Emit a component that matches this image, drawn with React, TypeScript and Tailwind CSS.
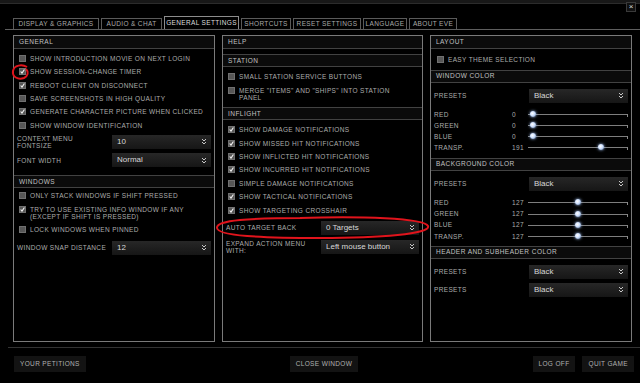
import clsx from "clsx";

const label = "text-[6.5px] uppercase tracking-[0.35px] leading-[7px] text-[#acacac] whitespace-nowrap";

function Box({ checked }: { checked?: boolean }) {
  return (
    <span className="flex h-[7px] w-[7px] shrink-0 items-center justify-center border border-[#707070] bg-[#575757]">
      {checked ? (
        <svg width="5" height="5" viewBox="0 0 6 6">
          <path d="M0.8 3 L2.4 5 L5.3 0.6" stroke="#f4f4f4" strokeWidth="1.3" fill="none" />
        </svg>
      ) : null}
    </span>
  );
}

function CheckRow({
  text,
  checked,
  className = "h-[13.3px]",
}: {
  text: string | string[];
  checked?: boolean;
  className?: string;
}) {
  const lines = Array.isArray(text) ? text : [text];
  return (
    <div className={clsx("flex items-center px-[5px]", className)}>
      <div className={clsx("flex gap-[4px]", lines.length > 1 ? "items-start" : "items-center")}>
        <Box checked={checked} />
        <div className="flex flex-col">
          {lines.map((l) => (
            <span key={l} className={label}>
              {l}
            </span>
          ))}
        </div>
      </div>
    </div>
  );
}

function Header({ title, top }: { title: string; top?: boolean }) {
  return (
    <div
      className={clsx(
        "flex h-[13px] shrink-0 items-center border-b border-[#424242] bg-[#0b0b0b] px-[5px]",
        top && "border-t",
      )}
    >
      <span className="text-[6.5px] uppercase tracking-[0.45px] text-[#c2c2c2]">{title}</span>
    </div>
  );
}

function Chevrons() {
  return (
    <svg width="6" height="7" viewBox="0 0 6 7">
      <path d="M1 1 L3 3 L5 1 M1 4 L3 6 L5 4" stroke="#c8c8c8" strokeWidth="1" fill="none" />
    </svg>
  );
}

function Select({ value, className }: { value: string; className?: string }) {
  return (
    <div
      className={clsx(
        "flex h-[14px] shrink-0 items-center justify-between bg-gradient-to-b from-[#272727] to-[#161616] pl-[5px] pr-[4px] text-[8px] text-[#d8d8d8]",
        className,
      )}
    >
      <span className="leading-none">{value}</span>
      <Chevrons />
    </div>
  );
}

function SelectRow({
  text,
  value,
  width = "w-[99px]",
  className,
}: {
  text: string[];
  value: string;
  width?: string;
  className?: string;
}) {
  return (
    <div className={clsx("flex items-center justify-between px-[3px]", className)}>
      <div className="flex flex-col">
        {text.map((t) => (
          <span key={t} className={label}>
            {t}
          </span>
        ))}
      </div>
      <Select value={value} className={width} />
    </div>
  );
}

function SliderRow({ name, value, className = "h-[11px]" }: { name: string; value: number; className?: string }) {
  return (
    <div className={clsx("flex items-center px-[3px]", className)}>
      <span className={clsx(label, "w-[78px]")}>{name}</span>
      <span className={clsx(label, "w-[16px]")}>{value}</span>
      <div className="relative h-full flex-1">
        <div className="absolute left-0 right-0 top-1/2 h-px bg-[#7e7e7e]" />
        <div className="absolute right-0 top-1/2 h-[3px] w-px bg-[#8a8a8a]" />
        <div
          className="absolute top-1/2 h-[6px] w-[6px] -translate-x-1/2 -translate-y-1/2 rounded-full bg-[radial-gradient(circle_at_40%_40%,#ffffff_0%,#d4e4ff_40%,#5f7fae_100%)] shadow-[0_0_3px_#a9c8ff]"
          style={{ left: 5 + (value / 255) * 91 }}
        />
      </div>
    </div>
  );
}

function Tab({ title, width, active }: { title: string; width: string; active?: boolean }) {
  return (
    <div
      className={clsx(
        "flex items-center justify-center border border-b-0 text-[6.5px] uppercase tracking-[0.35px] whitespace-nowrap",
        width,
        active ? "h-[13px] border-[#8c8c8c] text-[#dcdcdc]" : "h-[11px] border-[#5a5a5a] text-[#a9a9a9]",
      )}
    >
      {title}
    </div>
  );
}

function Button({ title }: { title: string }) {
  return (
    <div className="flex h-[16px] items-center bg-[#131313] px-[6px] text-[6.5px] uppercase tracking-[0.35px] text-[#b0b0b0] shadow-[0_1px_2px_#000]">
      {title}
    </div>
  );
}

export default function App() {
  return (
    <div className="relative flex h-[383px] w-[640px] flex-col overflow-hidden bg-black font-['Liberation_Sans',Arial,sans-serif]">
      <div className="h-[4px] shrink-0 border-b border-[#2c2c2c] bg-[#181818]" />

      <div className="absolute right-[4px] top-[2px] flex h-[10px] w-[10px] items-center justify-center border border-[#3a3a3a] bg-[#111] text-[8px] leading-none text-[#ddd]">
        ×
      </div>

      {/* tabs */}
      <div className="ml-[5px] mt-[12px] flex h-[14px] shrink-0 items-end gap-[2px] border-b border-[#5e5e5e] pl-[8px]">
        <Tab title="Display & Graphics" width="w-[86px]" />
        <Tab title="Audio & Chat" width="w-[61px]" />
        <Tab title="General Settings" width="w-[75px]" active />
        <Tab title="Shortcuts" width="w-[50px]" />
        <Tab title="Reset Settings" width="w-[68px]" />
        <Tab title="Language" width="w-[44px]" />
        <Tab title="About EVE" width="w-[48px]" />
      </div>

      {/* panels */}
      <div className="mt-[5px] flex h-[307px] shrink-0 gap-[7px] pl-[13px]">
        <div className="flex w-[202px] flex-col border border-[#7a7a7a]">
          <Header title="General" />
          <div className="flex h-[126px] shrink-0 flex-col pt-[3px]">
            <CheckRow text="Show introduction movie on next login" />
            <CheckRow text="Show session-change timer" checked />
            <CheckRow text="Reboot client on disconnect" checked />
            <CheckRow text="Save screenshots in high quality" />
            <CheckRow text="Generate character picture when clicked" checked />
            <CheckRow text="Show window identification" />
            <SelectRow text={["Context menu", "fontsize"]} value="10" className="mt-[2px] h-[16px]" />
            <SelectRow text={["Font width"]} value="Normal" className="mt-[3px] h-[15px]" />
          </div>
          <Header title="Windows" top />
          <div className="flex flex-col pt-[1.3px]">
            <CheckRow text="Only stack windows if shift pressed" />
            <CheckRow
              text={["Try to use existing info window if any", "(except if shift is pressed)"]}
              checked
              className="h-[20.7px]"
            />
            <CheckRow text="Lock windows when pinned" />
            <SelectRow text={["Window snap distance"]} value="12" className="mt-[4px] h-[14px]" />
          </div>
        </div>

        <div className="flex w-[201px] flex-col border border-[#7a7a7a]">
          <Header title="Help" />
          <div className="h-[5px] shrink-0" />
          <Header title="Station" top />
          <div className="flex h-[40px] shrink-0 flex-col pt-[3px]">
            <CheckRow text="Small station service buttons" />
            <CheckRow text={['Merge "items" and "ships" into station', "panel"]} className="h-[21px]" />
          </div>
          <Header title="Inflight" top />
          <div className="flex flex-col pt-[3px]">
            <CheckRow text="Show damage notifications" checked className="h-[13.43px]" />
            <CheckRow text="Show missed hit notifications" checked className="h-[13.43px]" />
            <CheckRow text="Show inflicted hit notifications" checked className="h-[13.43px]" />
            <CheckRow text="Show incurred hit notifications" checked className="h-[13.43px]" />
            <CheckRow text="Simple damage notifications" className="h-[13.43px]" />
            <CheckRow text="Show tactical notifications" checked className="h-[13.43px]" />
            <CheckRow text="Show targeting crosshair" checked className="h-[13.43px]" />
            <SelectRow text={["Auto target back"]} value="0 Targets" width="w-[98px]" className="mt-[4px] h-[14px]" />
            <SelectRow
              text={["Expand action menu", "with:"]}
              value="Left mouse button"
              width="w-[98px]"
              className="mt-[5px] h-[14px]"
            />
          </div>
        </div>

        <div className="flex w-[202px] flex-col border border-[#7a7a7a]">
          <Header title="Layout" />
          <div className="flex h-[20.7px] shrink-0 flex-col justify-center">
            <CheckRow text="Easy theme selection" className="h-[13px] pl-[6px]" />
          </div>
          <Header title="Window color" top />
          <div className="flex h-[75px] shrink-0 flex-col pt-[6px]">
            <SelectRow text={["Presets"]} value="Black" className="h-[14px]" />
            <div className="mt-[6px] flex flex-col">
              <SliderRow name="Red" value={0} />
              <SliderRow name="Green" value={0} />
              <SliderRow name="Blue" value={0} />
              <SliderRow name="Transp." value={191} />
            </div>
          </div>
          <Header title="Background color" top />
          <div className="flex h-[75px] shrink-0 flex-col pt-[6px]">
            <SelectRow text={["Presets"]} value="Black" className="h-[14px]" />
            <div className="mt-[6px] flex flex-col">
              <SliderRow name="Red" value={127} className="h-[11.3px]" />
              <SliderRow name="Green" value={127} className="h-[11.3px]" />
              <SliderRow name="Blue" value={127} className="h-[11.3px]" />
              <SliderRow name="Transp." value={127} className="h-[11.3px]" />
            </div>
          </div>
          <Header title="Header and subheader color" top />
          <div className="flex flex-col pt-[6px]">
            <SelectRow text={["Presets"]} value="Black" className="h-[14px]" />
            <SelectRow text={["Presets"]} value="Black" className="mt-[4px] h-[14px]" />
          </div>
        </div>
      </div>

      {/* bottom bar */}
      <div className="ml-[8px] mt-[5px] grid shrink-0 grid-cols-3 items-center border-t border-[#333] px-[6px] pt-[8px]">
        <div className="flex justify-start">
          <Button title="Your petitions" />
        </div>
        <div className="flex justify-center">
          <Button title="Close window" />
        </div>
        <div className="flex justify-end gap-[7px]">
          <Button title="Log off" />
          <Button title="Quit game" />
        </div>
      </div>

      {/* red annotations */}
      <svg className="pointer-events-none absolute left-0 top-0" width="640" height="383">
        <path
          d="M27 67 C22 64 14 65 13 71 C12 77 18 80 24 78 C28 76 29 72 26 69"
          stroke="#e0141c"
          strokeWidth="2"
          fill="none"
        />
        <path
          d="M300 218 C360 216 424 218 428 226 C431 234 380 238 320 238 C262 238 218 236 217 228 C216 220 250 218 305 218"
          stroke="#e0141c"
          strokeWidth="2"
          fill="none"
        />
      </svg>
    </div>
  );
}
